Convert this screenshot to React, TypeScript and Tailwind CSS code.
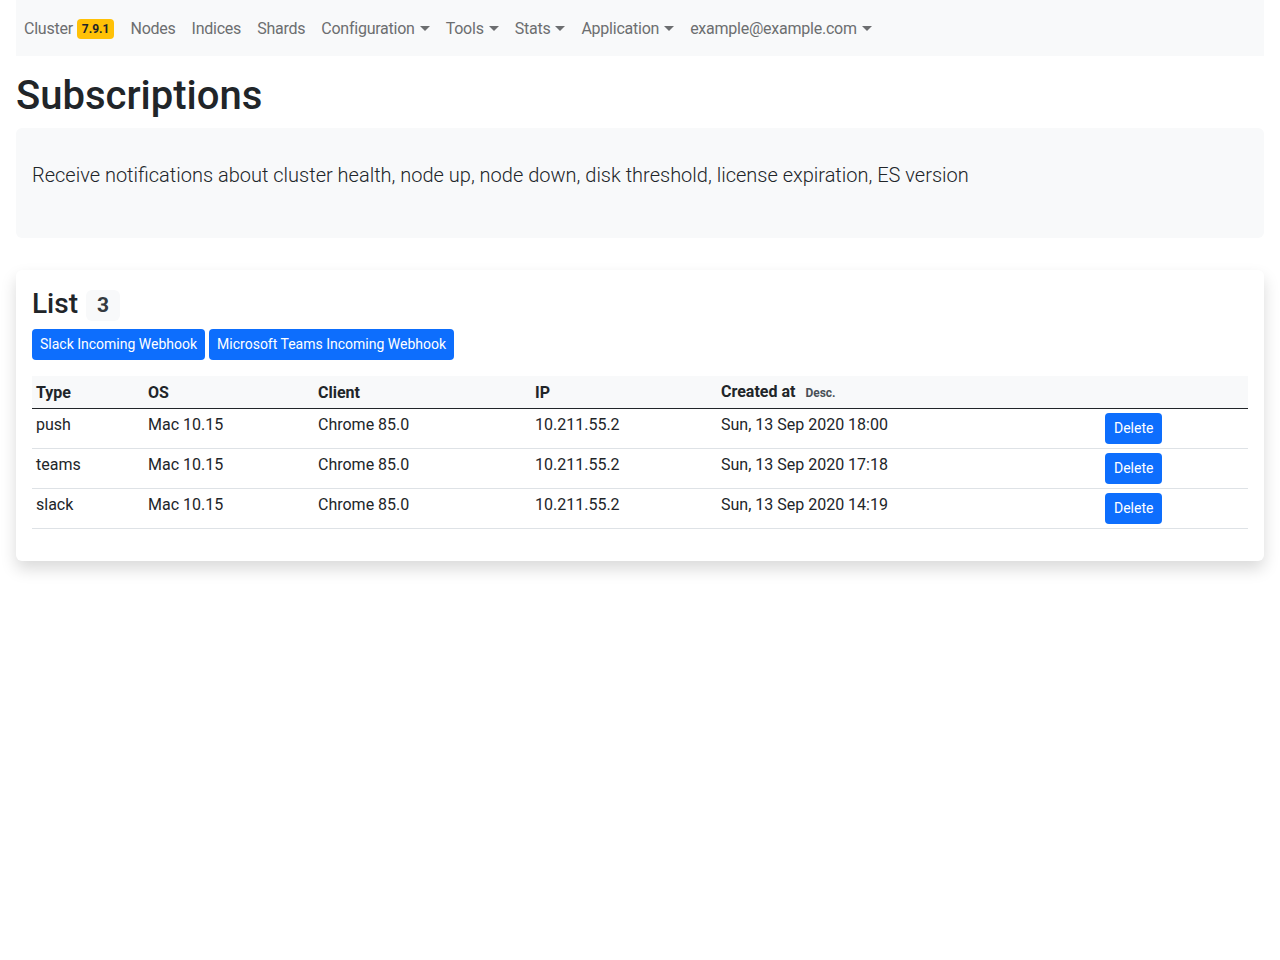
import React from "react";

const Caret = () => (
  <span className="ml-[5px] inline-block align-[3px] w-0 h-0 border-t-[5px] border-t-current border-x-[5px] border-x-transparent" />
);

const rows = [
  { type: "push", os: "Mac 10.15", client: "Chrome 85.0", ip: "10.211.55.2", at: "Sun, 13 Sep 2020 18:00" },
  { type: "teams", os: "Mac 10.15", client: "Chrome 85.0", ip: "10.211.55.2", at: "Sun, 13 Sep 2020 17:18" },
  { type: "slack", os: "Mac 10.15", client: "Chrome 85.0", ip: "10.211.55.2", at: "Sun, 13 Sep 2020 14:19" },
];

export default function App() {
  return (
    <div className="min-h-[960px] bg-white px-4 text-[#212529] text-base leading-6" style={{ fontFamily: "Roboto, 'Noto Sans', sans-serif" }}>
      <nav className="h-14 bg-[#f8f9fa] flex items-center pt-[2px] text-[#6c6e70] tracking-[-0.015em]">
        <a className="px-2 flex items-center">
          Cluster
          <span className="ml-1 bg-[#ffc107] text-[#212529] text-[12px] font-bold leading-none px-[5px] py-[4px] rounded-[4px] tracking-normal">7.9.1</span>
        </a>
        <a className="px-2">Nodes</a>
        <a className="px-2">Indices</a>
        <a className="px-2">Shards</a>
        <a className="px-2">Configuration<Caret /></a>
        <a className="px-2">Tools<Caret /></a>
        <a className="px-2">Stats<Caret /></a>
        <a className="px-2">Application<Caret /></a>
        <a className="px-2">example@example.com<Caret /></a>
      </nav>
      <h1 className="text-[40px] font-medium leading-[48px] mt-4 mb-2">Subscriptions</h1>
      <div className="bg-[#f8f9fa] rounded-[6px] px-4 pt-8 pb-8">
        <p className="text-[20px] font-light leading-[30px] mb-4">
          Receive notifications about cluster health, node up, node down, disk threshold, license expiration, ES version
        </p>
      </div>
      <div className="mt-8 bg-white rounded-[6px] shadow-[0_0.5rem_1rem_rgba(0,0,0,0.15)] p-4">
        <h3 className="text-[28px] font-medium leading-[34px] flex items-center">
          List
          <span className="ml-2 bg-[#f8f9fa] text-[#343a40] text-[21px] font-bold leading-none px-[11px] py-[5px] mt-[4px] rounded-[6px]">3</span>
        </h3>
        <div className="mt-2 flex gap-1">
          <button className="bg-[#0d6efd] text-white text-[14px] leading-[21px] px-2 py-[5px] rounded-[4px]">Slack Incoming Webhook</button>
          <button className="bg-[#0d6efd] text-white text-[14px] leading-[21px] px-2 py-[5px] rounded-[4px]">Microsoft Teams Incoming Webhook</button>
        </div>
        <table className="mt-4 mb-4 w-full border-collapse text-left">
          <thead>
            <tr className="bg-[#f8f9fa] border-b border-[#212529]">
              <th className="w-[112px] px-1 pt-1 pb-[3px] font-bold">Type</th>
              <th className="w-[170px] px-1 pt-1 pb-[3px] font-bold">OS</th>
              <th className="w-[217px] px-1 pt-1 pb-[3px] font-bold">Client</th>
              <th className="w-[186px] px-1 pt-1 pb-[3px] font-bold">IP</th>
              <th className="w-[384px] px-1 pt-1 pb-[3px] font-bold">
                Created at <span className="ml-[6px] text-[12px] font-bold text-[#495057]">Desc.</span>
              </th>
              <th className="px-1 pt-1 pb-[3px]"></th>
            </tr>
          </thead>
          <tbody>
            {rows.map((r) => (
              <tr key={r.type} className="border-b border-[#dee2e6] align-top">
                <td className="p-1">{r.type}</td>
                <td className="p-1">{r.os}</td>
                <td className="p-1">{r.client}</td>
                <td className="p-1">{r.ip}</td>
                <td className="p-1">{r.at}</td>
                <td className="p-1">
                  <button className="bg-[#0d6efd] text-white text-[14px] leading-[21px] px-[9px] py-[5px] rounded-[4px]">Delete</button>
                </td>
              </tr>
            ))}
          </tbody>
        </table>
      </div>
    </div>
  );
}
